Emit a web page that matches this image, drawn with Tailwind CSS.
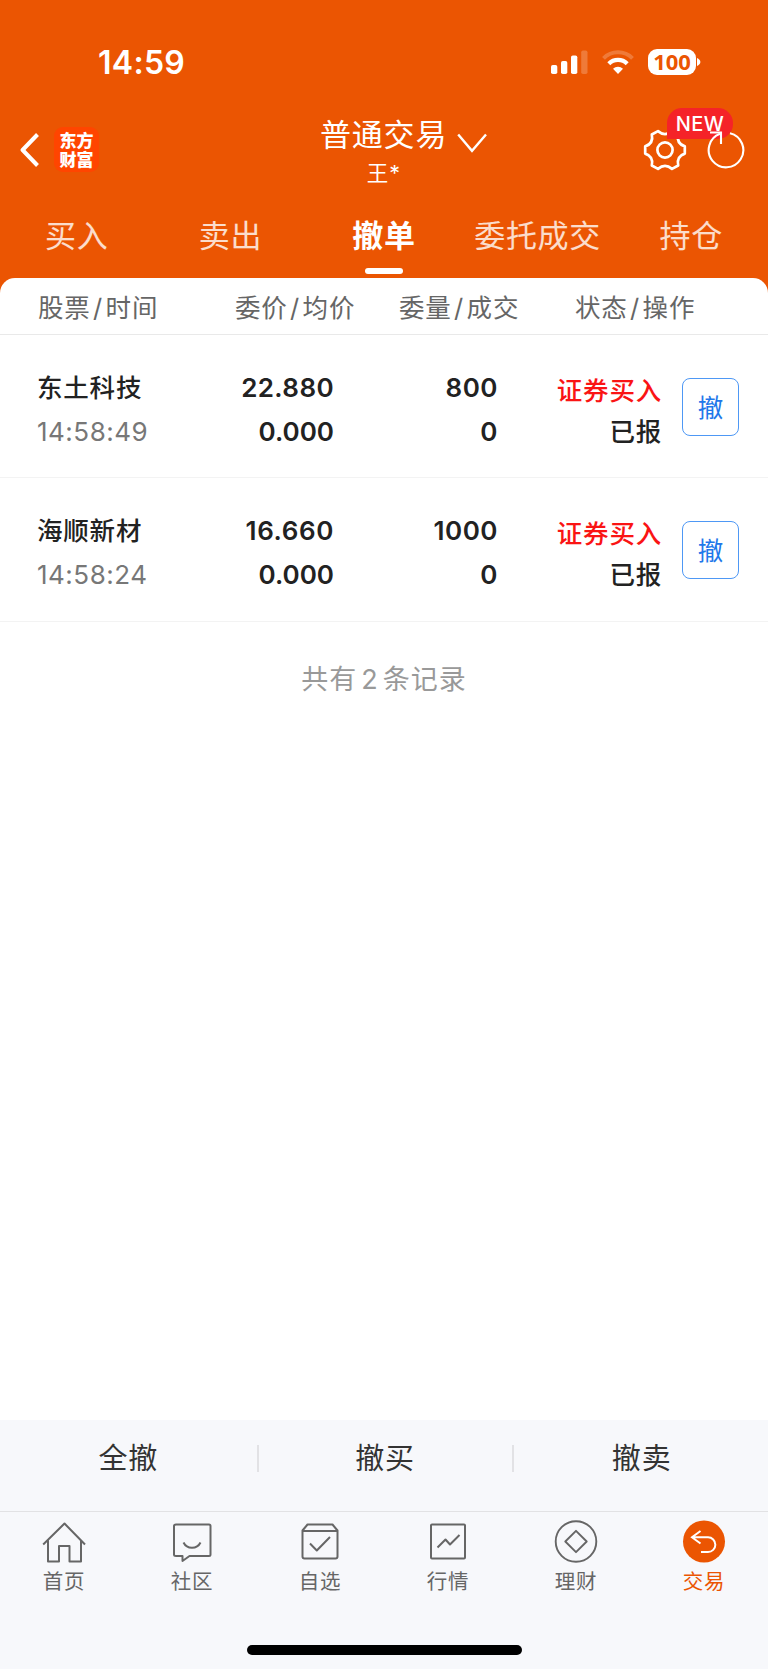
<!DOCTYPE html>
<html lang="zh-CN">
<head>
  <meta charset="UTF-8" />
  <meta name="viewport" content="width=device-width, initial-scale=1" />
  <title>普通交易 - 撤单</title>
  <script src="https://cdn.jsdelivr.net/npm/@tailwindcss/browser@4"></script>
</head>
<body class="bg-white h-[1670px] w-[768px] overflow-hidden font-['Inter','Noto_Sans_CJK_SC',sans-serif] text-[#222]">
  <div class="flex flex-col h-[1669px]">

    <header class="bg-[#eb5502] text-white h-[294px] shrink-0 flex flex-col">
      <!-- status bar -->
      <div class="h-[108px] pt-[16px] pl-[98px] pr-[67px] flex items-center justify-between">
        <span class="mt-[2px] text-[32px] leading-none font-semibold tracking-[0.3px]">14:59</span>
        <div class="flex items-center">
          <svg class="w-[38px] h-[26px]" viewBox="0 0 38 26" fill="#fff">
            <rect x="0" y="16" width="6.3" height="9" rx="1.8" />
            <rect x="10" y="12" width="6.3" height="13" rx="1.8" />
            <rect x="20" y="6.5" width="6.3" height="18.5" rx="1.8" />
            <rect x="30.2" y="1.5" width="6.3" height="23.5" rx="1.8" opacity=".22" />
          </svg>
          <svg class="w-[32px] h-[26px] ml-[13px]" viewBox="0 0 32 26" fill="none" stroke="#fff">
            <path d="M1.500 9.300a20.600 20.600 0 0 1 29 0" stroke-width="4" opacity=".22" />
            <path d="M6.800 14.700a13 13 0 0 1 18.400 0" stroke-width="4.200" />
            <path d="M16 25l-5-5.200a7.400 7.400 0 0 1 10 0z" fill="#fff" stroke="none" />
          </svg>
          <div class="ml-[14px] w-[48px] h-[26px] rounded-[9px] bg-white text-[#eb5502] text-[22px] leading-[25px] font-bold text-center font-['Open_Sans',sans-serif]">100</div>
          <svg class="w-[4px] h-[8px] ml-px" viewBox="0 0 4 8" fill="#fff"><path d="M0 0c2 .8 3.4 2.3 3.4 4S2 7.200 0 8z" /></svg>
        </div>
      </div>

      <!-- title bar -->
      <div class="relative h-[85px] pl-[20px] pr-[23px] flex items-center justify-between">
        <div class="flex items-center -mt-[2px]">
          <svg class="w-[20px] h-[36px]" viewBox="0 0 20 36" fill="none" stroke="#fff" stroke-width="4" stroke-linejoin="round"><path d="M17.500 2.500L2.600 18 17.500 33.500" /></svg>
          <div class="ml-[14px] w-[45px] h-[45px] rounded-[9px] bg-[#ff4500] text-center text-[17px] leading-[19px] pt-[3px] font-black font-['Noto_Sans_CJK_SC',sans-serif]">东方<br />财富</div>
        </div>
        <div class="absolute left-[320px] top-[6px]">
          <div class="flex items-center">
            <span class="text-[31px] leading-[41px] tracking-[0.8px]">普通交易</span>
            <svg class="w-[30px] h-[20px] ml-[10px] mt-[17px]" viewBox="0 0 30 20" fill="none" stroke="#fff" stroke-width="2.400"><path d="M1.200 1.500L15 17.800 29 1.500" /></svg>
          </div>
          <div class="mt-[4px] w-[128px] text-center text-[21.5px] leading-[28px] tracking-[1px]">王*</div>
        </div>
        <svg class="ml-auto mr-[58px] -mt-[2px] w-[44px] h-[44px]" viewBox="-22 -22 44 44" fill="none" stroke="#fff" stroke-width="2.700" stroke-linejoin="round">
          <circle r="7.600" />
          <path d="M19.800 3.600Q11.200 6.500 13.200 15.500L7 18.900Q0 13-7 18.900L-13.200 15.500Q-11.200 6.500-19.800 3.600V-3.600Q-11.200-6.500-13.200-15.500L-7-18.900Q0-13 7-18.900L13.200-15.500Q11.200-6.500 19.800-3.600Z" />
        </svg>
        <div class="absolute left-[667px] top-0 w-[66px] h-[31px] rounded-[15px] rounded-bl-none bg-[#f52328] text-[20px] leading-[32px] font-medium text-center tracking-[0.500px]">NEW</div>
        <svg class="absolute left-[706px] top-[20px] w-[40px] h-[44px]" viewBox="0 0 40 44" fill="none" stroke="#fff" stroke-width="2.100">
          <path d="M24 5.200A17.300 17.300 0 1 1 14 5.800" />
          <path d="M4 4.500H15V16" />
        </svg>
      </div>

      <!-- trade tabs -->
      <nav class="h-[85px] grid grid-cols-5 text-center text-[31px] leading-[85px] tracking-[0.700px] text-white/80">
        <span>买入</span>
        <span>卖出</span>
        <span class="relative text-white font-bold">撤单<i class="absolute left-1/2 -translate-x-1/2 top-[75px] w-[38px] h-[6px] rounded-full bg-white"></i></span>
        <span class="whitespace-nowrap">委托成交</span>
        <span>持仓</span>
      </nav>
    </header>

    <main class="relative bg-white rounded-t-[15px] -mt-[16px] grow">
      <div class="h-[57px] border-b border-[#e9e9e9] flex items-center pt-[3px] pl-[38px] text-[25.500px] leading-none tracking-[0.800px] text-[#666]">
        <span class="w-[197px]">股票<span class="mx-[2.500px]">/</span>时间</span>
        <span class="w-[164px]">委价<span class="mx-[2.500px]">/</span>均价</span>
        <span class="w-[176px]">委量<span class="mx-[2.500px]">/</span>成交</span>
        <span>状态<span class="mx-[2.500px]">/</span>操作</span>
      </div>

      <div class="h-[143px] border-b border-[#f3f3f3] flex pl-[37px] pt-[31px] text-[26px] leading-[44px]">
        <div class="w-[146px]">
          <div class="text-[25.500px] font-medium tracking-[0.800px]">东土科技</div>
          <div class="text-[#777] tracking-[0.500px]">14:58:49</div>
        </div>
        <div class="w-[151px] text-right font-semibold">
          <div class="tracking-[0.400px]">22.880</div>
          <div>0.000</div>
        </div>
        <div class="w-[164px] text-right font-semibold tracking-[0.500px]">
          <div>800</div>
          <div>0</div>
        </div>
        <div class="w-[164px] pt-[4px] text-right text-[25.500px] leading-[41px] font-medium tracking-[0.800px]">
          <div class="text-[#fa1414]">证券买入</div>
          <div>已报</div>
        </div>
        <button class="ml-[20px] mt-[12px] w-[57px] h-[58px] rounded-[8px] border border-[#4e98f5] text-[#1f78ea] text-[25.500px] leading-[58px]">撤</button>
      </div>

      <div class="h-[144px] border-b border-[#f3f3f3] flex pl-[37px] pt-[31px] text-[26px] leading-[44px]">
        <div class="w-[146px]">
          <div class="text-[25.500px] font-medium tracking-[0.800px]">海顺新材</div>
          <div class="text-[#777] tracking-[0.500px]">14:58:24</div>
        </div>
        <div class="w-[151px] text-right font-semibold">
          <div class="tracking-[0.600px]">16.660</div>
          <div>0.000</div>
        </div>
        <div class="w-[164px] text-right font-semibold tracking-[0.500px]">
          <div>1000</div>
          <div>0</div>
        </div>
        <div class="w-[164px] pt-[4px] text-right text-[25.500px] leading-[41px] font-medium tracking-[0.800px]">
          <div class="text-[#fa1414]">证券买入</div>
          <div>已报</div>
        </div>
        <button class="ml-[20px] mt-[12px] w-[57px] h-[58px] rounded-[8px] border border-[#4e98f5] text-[#1f78ea] text-[25.500px] leading-[58px]">撤</button>
      </div>

      <p class="mt-[38px] text-center text-[27px] leading-[40px] tracking-[1px] text-[#999]">共有<span class="mx-[4px]">2</span>条记录</p>
    </main>

    <!-- batch cancel -->
    <div class="h-[92px] shrink-0 bg-[#f7f8fb] border-b border-[#e2e2e4] pt-[25px]">
      <div class="pl-[2px] -mr-px grid grid-cols-3 divide-x-2 divide-[#e2e2e5] text-center text-[29px] leading-[27px] tracking-[0.800px] text-[#333]">
        <span class="-ml-[2px] -mr-px">全撤</span>
        <span class="-mr-px">撤买</span>
        <span class="-mr-px">撤卖</span>
      </div>
    </div>

    <footer class="h-[157px] shrink-0 bg-[#f7f8fb] flex flex-col items-center">
      <nav class="w-full grid grid-cols-6 pt-[7px] text-[20.500px] leading-[30px] tracking-[0.800px] text-[#666]">
        <a class="flex flex-col items-center gap-[2px]">
          <svg class="w-[46px] h-[46px]" viewBox="0 0 46 46" fill="none" stroke="#666" stroke-width="2" stroke-linejoin="round"><path d="M2.200 25.500L23.500 4.500 44 25.500M7 21.500V42.500H18V27H28.500V42.500H40V21.500" /></svg>
          <span>首页</span>
        </a>
        <a class="flex flex-col items-center gap-[2px]">
          <svg class="w-[46px] h-[46px]" viewBox="0 0 46 46" fill="none" stroke="#666" stroke-width="2" stroke-linejoin="round"><path d="M7 5.500H40Q41.500 5.500 41.500 7V35.500Q41.500 37 40 37H20.500L13.500 42V37H7Q5 37 5 35.500V7Q5 5.500 7 5.500Z" /><path d="M14.500 23.500C18 30.500 28 30.500 31.500 23.500" /></svg>
          <span>社区</span>
        </a>
        <a class="flex flex-col items-center gap-[2px]">
          <svg class="w-[46px] h-[46px]" viewBox="0 0 46 46" fill="none" stroke="#666" stroke-width="2" stroke-linejoin="round"><path d="M5.500 11.500L10.500 5.500H35.500L40.500 11.500V37.500Q40.500 39.500 38.500 39.500H7.500Q5.500 39.500 5.500 37.500ZM5.500 12H40.500M13 24.500L19.800 31.500 33 18" /></svg>
          <span>自选</span>
        </a>
        <a class="flex flex-col items-center gap-[2px]">
          <svg class="w-[46px] h-[46px]" viewBox="0 0 46 46" fill="none" stroke="#666" stroke-width="2" stroke-linejoin="round"><rect x="6" y="5.500" width="34" height="34" rx="1" /><path d="M12.500 28.500L20.500 20.500 25 25.500 34.500 16" /></svg>
          <span>行情</span>
        </a>
        <a class="flex flex-col items-center gap-[2px]">
          <svg class="w-[46px] h-[46px]" viewBox="0 0 46 46" fill="none" stroke="#666" stroke-width="1.900" stroke-linejoin="round"><circle cx="23" cy="22.500" r="20.300" /><path d="M23 11.800L33.700 22.500 23 33.200 12.300 22.500Z" /></svg>
          <span>理财</span>
        </a>
        <a class="flex flex-col items-center gap-[2px] text-[#eb5502]">
          <svg class="w-[46px] h-[46px]" viewBox="0 0 46 46" fill="none" stroke="#fff" stroke-width="2"><circle cx="23" cy="22.500" r="21" fill="#eb5502" stroke="none" /><path d="M19.500 12L11 18.300 19.500 24.500M11.500 18.300H27A7.300 7.300 0 0 1 27 33H20" /></svg>
          <span>交易</span>
        </a>
      </nav>
      <div class="mt-[48px] w-[275px] h-[10px] shrink-0 rounded-full bg-black"></div>
    </footer>

  </div>
</body>
</html>
